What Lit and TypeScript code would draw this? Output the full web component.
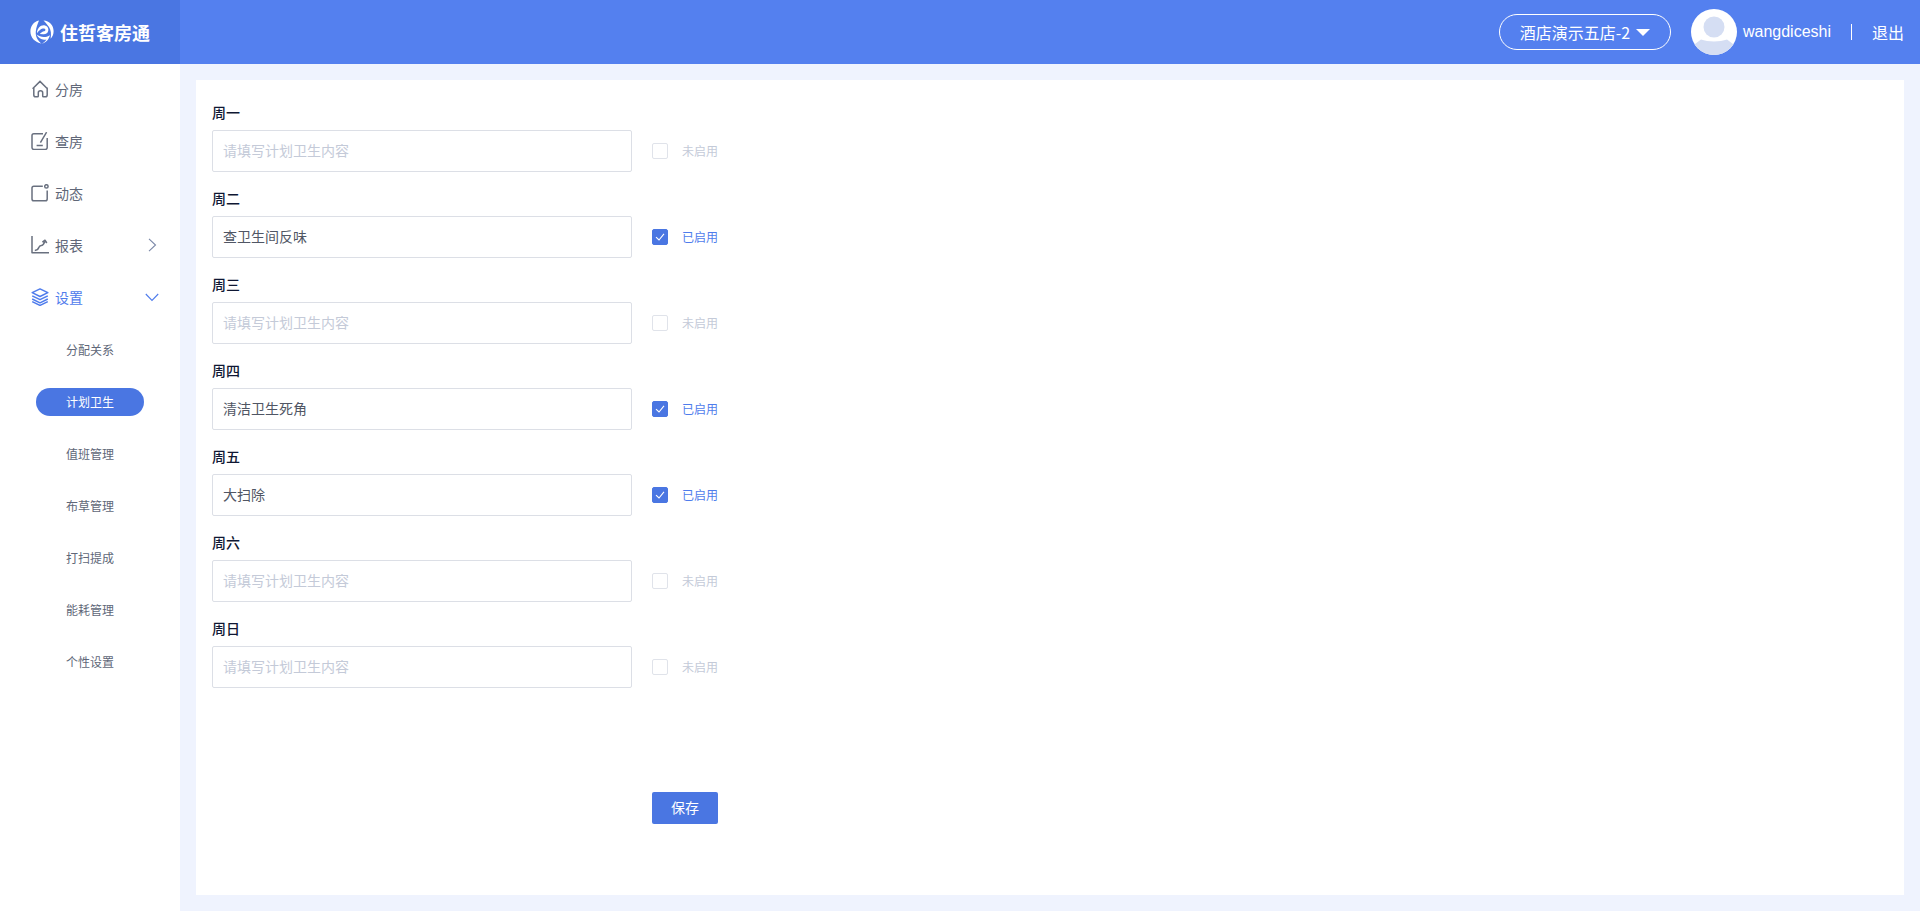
import { LitElement, html, css, svg } from "lit";
import { customElement } from "lit/decorators.js";

const icons: Record<string, unknown> = {
  home: svg`<path d="M1.600 8.800 9 1.400l7.400 7.400M2.800 7.600v7.400c0 1.100.7 1.800 1.800 1.800h1.900c.5 0 .8-.3.8-.8v-3.200c0-1.200 1-2.100 2.200-2.100s2.200.9 2.200 2.100V16c0 .5.3.8.8.8h1.900c1.100 0 1.800-.7 1.800-1.800V7.600" />`,
  check: svg`<path d="M12 1.800H2.800C1.700 1.800 1 2.500 1 3.600v12c0 1.100.7 1.800 1.800 1.800h11.600c1.100 0 1.800-.7 1.800-1.800V6M9.400 10.600 15.600.2M5.600 13.400h6.200" />`,
  dyn: svg`<path d="M11.800 2.200H2.800C1.700 2.200 1 2.900 1 4v11c0 1.100.7 1.800 1.800 1.800h11.600c1.100 0 1.800-.7 1.800-1.800V6.600" /><circle cx="15.400" cy="2.400" r="1.700" />`,
  chart: svg`<path d="M1 0v16.800h17M3.800 14.400c2.600 0 3.400-1 4-2.800.5-1.500 1-2.200 2.400-2.200 2 0 2.800-1.600 3.600-4.200M11.400 6.200l2.600-2 1.800 2.800" stroke-linejoin="round" />`,
  layers: svg`<path d="M9 .9 16.800 4.700 9 8.500 1.200 4.700zM1.200 7.900 9 11.700l7.800-3.800M1.200 11 9 14.800l7.800-3.800M1.200 13.600 9 17.400l7.800-3.800" stroke-linejoin="round" />`,
};

const menu = [
  { icon: "home", label: "分房" },
  { icon: "check", label: "查房" },
  { icon: "dyn", label: "动态" },
  { icon: "chart", label: "报表", arrow: "right" },
  { icon: "layers", label: "设置", arrow: "down", open: true },
];
const subs = ["分配关系", "计划卫生", "值班管理", "布草管理", "打扫提成", "能耗管理", "个性设置"];
const days = [
  { day: "周一", value: "" },
  { day: "周二", value: "查卫生间反味" },
  { day: "周三", value: "" },
  { day: "周四", value: "清洁卫生死角" },
  { day: "周五", value: "大扫除" },
  { day: "周六", value: "" },
  { day: "周日", value: "" },
];

@customElement("app-root")
export class AppRoot extends LitElement {
  static styles = css`
    :host {
      display: block;
      width: 100%;
      height: 911px;
      overflow: hidden;
      font-family: "Noto Sans CJK SC", "Liberation Sans", sans-serif;
      background: #eff3fe;
    }
    * { box-sizing: border-box; }
    .header {
      display: flex;
      align-items: center;
      height: 64px;
      background: #5480ef;
      color: #fff;
    }
    .brand {
      display: flex;
      align-items: center;
      gap: 6px;
      width: 180px;
      height: 64px;
      padding-left: 30px;
      background: #4a76e2;
      font-size: 18px;
      font-weight: 700;
    }
    .brand svg { flex: none; }
    .spacer { flex: 1; }
    .hotel {
      display: flex;
      align-items: center;
      justify-content: center;
      gap: 6px;
      width: 172px;
      height: 36px;
      margin-right: 20px;
      border: 1px solid #fff;
      border-radius: 18px;
      font-size: 16px;
    }
    .caret {
      width: 0;
      height: 0;
      border-left: 7px solid transparent;
      border-right: 7px solid transparent;
      border-top: 7px solid #fff;
    }
    .avatar { display: block; flex: none; margin-right: 6px; }
    .user { font-family: "Liberation Sans", sans-serif; font-size: 16px; }
    .sep { width: 1px; height: 16px; background: #fff; margin: 0 20px; }
    .logout { font-size: 16px; margin-right: 16px; }
    .body { display: flex; height: 847px; }
    .side {
      flex: none;
      width: 180px;
      background: #fff;
      color: #606778;
    }
    .item {
      display: flex;
      align-items: center;
      height: 52px;
      padding-left: 31px;
      padding-bottom: 2px;
      font-size: 14px;
    }
    .item svg.ic {
      flex: none;
      width: 18px;
      height: 18px;
      margin-right: 6px;
      fill: none;
      stroke: #69707f;
      stroke-width: 1.500;
    }
    .item.open { color: #4f7cec; }
    .item.open svg.ic { stroke: #4f7cec; stroke-width: 1.500; }
    .item svg.arrow {
      flex: none;
      width: 14px;
      height: 14px;
      margin-left: auto;
      margin-right: 21px;
      fill: none;
      stroke: #7b88a8;
      stroke-width: 1.100;
    }
    .item.open svg.arrow { stroke: #4f7cec; }
    .sub {
      display: flex;
      align-items: center;
      justify-content: center;
      height: 52px;
      font-size: 12px;
    }
    .sub span {
      display: block;
      width: 108px;
      height: 28px;
      line-height: 28px;
      text-align: center;
      border-radius: 14px;
    }
    .sub.active span { background: #4a76e2; color: #fff; }
    .main { flex: 1; padding: 16px; min-width: 0; }
    .card {
      height: 815px;
      background: #fff;
      padding: 20px 16px 0;
    }
    .day {
      height: 30px;
      font-size: 14px;
      font-weight: 500;
      color: #0f1733;
      line-height: 24px;
    }
    .row {
      display: flex;
      align-items: center;
      height: 42px;
      margin-bottom: 14px;
    }
    input {
      width: 420px;
      height: 42px;
      padding: 0 10px 2px;
      border: 1px solid #dcdfe6;
      border-radius: 2px;
      outline: none;
      font: inherit;
      font-size: 14px;
      color: #505664;
      background: #fff;
    }
    input::placeholder { color: #c4cad8; }
    .cb {
      display: flex;
      align-items: center;
      justify-content: center;
      width: 16px;
      height: 16px;
      margin-left: 20px;
      margin-right: 14px;
      border: 1px solid #e0e3ea;
      border-radius: 2px;
      background: #fff;
    }
    .cb.on { background: #4a76e2; border-color: #4a76e2; }
    .state { font-size: 12px; color: #c4cad8; padding-bottom: 2px; }
    .state.on { color: #4f7cec; }
    .actions { padding-left: 440px; margin-top: 104px; }
    button {
      display: block;
      width: 66px;
      height: 32px;
      padding: 0 0 2px;
      border: 0;
      border-radius: 2px;
      background: #4a76e2;
      color: #fff;
      font: inherit;
      font-size: 14px;
    }
  `;

  render() {
    return html`
      <div class="header">
        <div class="brand">
          <svg width="24" height="24" viewBox="0 0 24 24" fill="#fff">
            <path d="M9 .4C3.500 1.500.4 6 .4 11.500.4 17.500 5 22.500 11.500 23.600 7.500 20.500 5.400 16.500 5.800 11.500 6.100 7.500 7.500 4 9 .4z" />
            <path d="M13.500.4C19.500.6 23.600 5.200 23.600 11 23.600 14 22.800 16.500 20.600 18.800 21.400 14 21 10 19 7 17.600 4.800 15.500 2.500 13.500.4z" />
            <path d="M7 13.200C7 8 11 4.400 15 5.400 18.800 6.400 19.400 11 16.800 13.200 15.800 14 14.600 14.400 13.200 14.300L9.800 14C11 12.600 12.600 11.600 14.200 11.300 15.200 11 15.600 10.400 15.400 9.600 15.100 8.600 14 8.200 12.800 8.500 10.600 9 8.600 10.800 7 13.200z" />
            <path d="M6.600 14.600C10.500 17.600 15.500 18 20 15.200 18.800 19.600 15.800 22.800 12 23.600 14 22.400 15.400 21 16.400 19.400 12.400 20.600 8.600 18.600 6.600 14.600z" />
          </svg>
          <span>住哲客房通</span>
        </div>
        <div class="spacer"></div>
        <div class="hotel"><span>酒店演示五店-2</span><i class="caret"></i></div>
        <svg class="avatar" width="46" height="46" viewBox="0 0 46 46">
          <defs><clipPath id="av"><circle cx="23" cy="23" r="23" /></clipPath></defs>
          <circle cx="23" cy="23" r="23" fill="#fff" />
          <circle cx="23" cy="18" r="10.500" fill="#d5def3" />
          <path clip-path="url(#av)" d="M0 46V38L10 30.500C17 33 29 33 36 30.500L46 38V46z" fill="#d5def3" />
        </svg>
        <span class="user">wangdiceshi</span>
        <i class="sep"></i>
        <span class="logout">退出</span>
      </div>
      <div class="body">
        <nav class="side">
          ${menu.map(
            (m) => html`<div class="item ${m.open ? "open" : ""}">
              <svg class="ic" viewBox="0 0 18 18">${icons[m.icon]}</svg>
              <span>${m.label}</span>
              ${m.arrow === "right"
                ? html`<svg class="arrow" viewBox="0 0 14 14"><path d="M4 .8 10.500 7 4 13.200" /></svg>`
                : m.arrow === "down"
                  ? html`<svg class="arrow" viewBox="0 0 14 14"><path d="M.8 4 7 10.500 13.200 4" /></svg>`
                  : ""}
            </div>`,
          )}
          ${subs.map(
            (s, i) => html`<div class="sub ${i === 1 ? "active" : ""}"><span>${s}</span></div>`,
          )}
        </nav>
        <main class="main">
          <div class="card">
            ${days.map(
              (d) => html`
                <div class="day">${d.day}</div>
                <div class="row">
                  <input .value=${d.value} placeholder="请填写计划卫生内容" />
                  <span class="cb ${d.value ? "on" : ""}">
                    ${d.value
                      ? html`<svg width="10" height="10" viewBox="0 0 10 10" fill="none" stroke="#fff" stroke-width="1.100"><path d="M1 5.200 4 8 9 1.800" /></svg>`
                      : ""}
                  </span>
                  <span class="state ${d.value ? "on" : ""}">${d.value ? "已启用" : "未启用"}</span>
                </div>
              `,
            )}
            <div class="actions"><button>保存</button></div>
          </div>
        </main>
      </div>
    `;
  }
}
